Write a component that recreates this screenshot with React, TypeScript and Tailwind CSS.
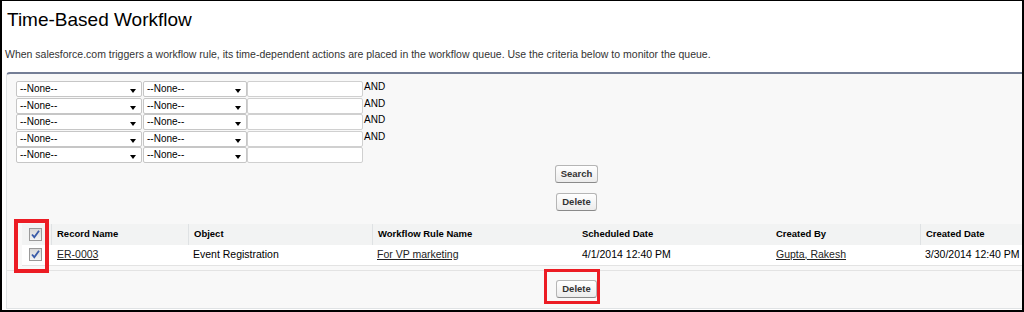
import React from 'react';

const COLUMNS = [
  { label: 'Record Name', width: 'w-[137px]', divider: true },
  { label: 'Object', width: 'w-[184px]', divider: true },
  { label: 'Workflow Rule Name', width: 'w-[205px]', divider: true },
  { label: 'Scheduled Date', width: 'w-[194px]', divider: false },
  { label: 'Created By', width: 'w-[149px]', divider: false },
  { label: 'Created Date', width: 'w-[200px]', divider: true },
];

const ROW = [
  { text: 'ER-0003', link: true },
  { text: 'Event Registration', link: false },
  { text: 'For VP marketing', link: true },
  { text: '4/1/2014 12:40 PM', link: false },
  { text: 'Gupta, Rakesh', link: true },
  { text: '3/30/2014 12:40 PM', link: false },
];

const Select = ({ width }: { width: string }) => (
  <div
    className={`${width} h-[16px] relative bg-white border border-[#c6c6c6] rounded-[2px] text-[10px] leading-[14px] pl-[3px] text-black`}
  >
    --None--
    <span className="absolute right-[5px] bottom-[3px] w-0 h-0 border-l-[3.5px] border-r-[3.5px] border-t-[4px] border-l-transparent border-r-transparent border-t-black" />
  </div>
);

const Checkbox = () => (
  <span className="inline-flex w-[13px] h-[13px] border border-[#9a9a9a] bg-gradient-to-b from-[#d8d8d8] to-[#f4f4f4] items-center justify-center">
    <svg width="11" height="11" viewBox="0 0 11 11">
      <path d="M2 5.5 L4.3 8.2 L9 1.8" fill="none" stroke="#3a5ba8" strokeWidth="1.8" />
    </svg>
  </span>
);

const Button = ({ label }: { label: string }) => (
  <button className="h-[18px] px-[5px] text-[9.5px] leading-[14px] font-bold text-[#333] bg-gradient-to-b from-white to-[#ececec] border border-[#b5b5b5] border-b-[#8a8a8a] rounded-[3px]">
    {label}
  </button>
);

export default function App() {
  return (
    <div
      className="w-[1024px] h-[312px] bg-white border-t border-l-2 border-r-2 border-b-2 border-black overflow-hidden relative"
      style={{ fontFamily: '"Liberation Sans", Arial, sans-serif' }}
    >
      <h1 className="mt-[7px] pl-[5px] text-[19px] leading-[24px] text-black">Time-Based Workflow</h1>
      <p className="mt-[16px] pl-[3px] text-[10.5px] leading-[13px] text-[#333]">
        When salesforce.com triggers a workflow rule, its time-dependent actions are placed in the workflow queue. Use the
        criteria below to monitor the queue.
      </p>

      <div className="mt-[11px] ml-[4px] w-[1140px] bg-[#f8f8f8] border-t-2 border-t-[#747e96] border-l border-l-[#e0e3e5] border-b border-b-[#e0e3e5] rounded-tl-[4px] pt-[7px] pb-[10px] pl-[9px]">
        <div className="flex flex-col">
          {[0, 1, 2, 3, 4].map((i) => (
            <div key={i} className="flex items-start h-[16.5px]">
              <Select width="w-[126px]" />
              <div className="ml-[1px]">
                <Select width="w-[104px]" />
              </div>
              <div className="w-[116px] h-[16px] bg-white border border-[#d0d0d0] rounded-[2px]" />
              {i < 4 && <span className="ml-[1px] text-[10px] leading-[12px] text-black">AND</span>}
            </div>
          ))}
        </div>

        <div className="flex justify-center pr-[9px] mt-[1px]">
          <Button label="Search" />
        </div>
        <div className="flex justify-center pr-[9px] mt-[10px]">
          <Button label="Delete" />
        </div>

        <div className="mt-[13px] ml-[6px]">
          <div className="flex h-[21px] bg-[#f2f3f3] items-center text-[9.5px] font-bold text-black">
            <div className="w-[29px] h-full flex items-center pl-[7px]">
              <Checkbox />
            </div>
            {COLUMNS.map((c) => (
              <div
                key={c.label}
                className={`${c.width} h-full flex items-center px-[5px] ${c.divider ? 'border-l border-l-[#dfe2e4]' : ''}`}
              >
                {c.label}
              </div>
            ))}
          </div>
          <div className="flex h-[21px] bg-white items-center text-[10.5px] text-black border-b border-b-[#e3e3e3]">
            <div className="w-[29px] h-full flex items-center pl-[7px]">
              <Checkbox />
            </div>
            {ROW.map((cell, i) => (
              <div key={i} className={`${COLUMNS[i].width} px-[5px] whitespace-nowrap ${i === 0 ? 'pl-[6px]' : ''}`}>
                {cell.link ? <a className="underline text-[#222]">{cell.text}</a> : cell.text}
              </div>
            ))}
          </div>
          <div className="mt-[4px] h-px bg-[#e3e3e3] -ml-[15px]" />
        </div>

        <div className="flex justify-center pr-[9px] mt-[9px]">
          <Button label="Delete" />
        </div>
      </div>

      {/* annotation boxes */}
      <div className="absolute left-[12px] top-[218px] w-[35px] h-[54px] border-[4px] border-[#ec1c24]" />
      <div className="absolute left-[542px] top-[268px] w-[56px] h-[35px] border-[3px] border-[#ec1c24]" />
    </div>
  );
}
